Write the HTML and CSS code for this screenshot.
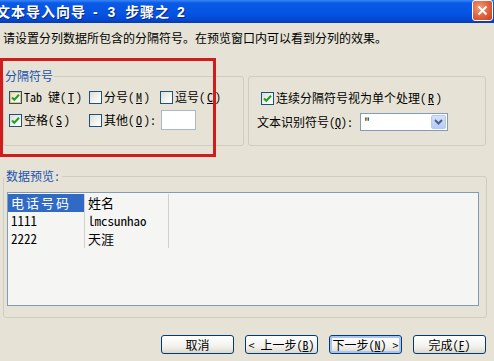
FILE: index.html
```html
<html>
<head>
<title>文本导入向导 - 3 步骤之 2</title>
<link rel="stylesheet" href="styles.css">
</head>
<body>

<div class="titlebar">
  <span class="title">文本导入向导<span class="lat"> - 3 </span>步骤之<span class="lat"> 2</span></span>
  <span class="close"><svg width="11" height="11" viewBox="0 0 11 11"><path d="M1.5 1.5l8 8M9.5 1.5l-8 8"/></svg></span>
</div>

<p class="intro">请设置分列数据所包含的分隔符号。在预览窗口内可以看到分列的效果。</p>

<div class="groups">

  <div class="group sep">
    <div class="legend">分隔符号</div>
    <div class="sep-grid">
      <label class="opt"><span class="box hot checked"><svg viewBox="0 0 11 11"><path d="M2 5.5l2.3 2.3 4.7-5"/></svg></span>Tab 键(<u>T</u>)</label>
      <label class="opt"><span class="box"></span>分号(<u>M</u>)</label>
      <label class="opt"><span class="box"></span>逗号(<u>C</u>)</label>
      <label class="opt"><span class="box checked"><svg viewBox="0 0 11 11"><path d="M2 5.5l2.3 2.3 4.7-5"/></svg></span>空格(<u>S</u>)</label>
      <label class="opt"><span class="box"></span>其他(<u>O</u>):<span class="field"></span></label>
    </div>
  </div>

  <div class="group other">
    <label class="opt first"><span class="box checked"><svg viewBox="0 0 11 11"><path d="M2 5.5l2.3 2.3 4.7-5"/></svg></span>连续分隔符号视为单个处理(<u>R</u>)</label>
    <div class="qualifier">
      文本识别符号(<u>Q</u>):
      <span class="combo"><span class="value">"</span><span class="drop"><svg width="9" height="6" viewBox="0 0 9 6"><path d="M1 1l3.5 3.5L8 1"/></svg></span></span>
    </div>
  </div>

</div>

<div class="group preview">
  <div class="legend">数据预览:</div>
  <div class="listbox">
    <div class="table">
      <div class="cell sel">电话号码</div><div class="cell">姓名</div>
      <div class="cell">1111</div><div class="cell">lmcsunhao</div>
      <div class="cell">2222</div><div class="cell">天涯</div>
    </div>
  </div>
</div>

<div class="buttons">
  <span class="btn">取消</span>
  <span class="btn">&lt; 上一步(<u>B</u>)</span>
  <span class="btn default">下一步(<u>N</u>) &gt;</span>
  <span class="btn">完成(<u>F</u>)</span>
</div>

<div class="marker"></div>

</body>
</html>
```

FILE: styles.css
```css
body {
   margin: 0;
   width: 494px;
   height: 361px;
   overflow: hidden;
   position: relative;
   background: #e6e3d6;
   color: #000;
   font: 12px/14px "Noto Sans Mono CJK SC", "Noto Sans CJK SC", monospace; }

u {
   text-decoration: underline;
   text-underline-offset: 1px; }

/* title bar */

.titlebar {
   height: 23px;
   display: flex;
   align-items: center;
   justify-content: space-between;
   padding-right: 1px;
   background: linear-gradient(#3a86f6 0, #0a5ae6 3px, #0553e2 14px, #0447d3 20px, #0b3aa8 23px); }

.title {
   margin-left: -4px;
   color: #fff;
   font-weight: bold;
   font-size: 14px;
   letter-spacing: 1px;
   white-space: pre;
   text-shadow: 1px 1px #0a2a86; }

.title .lat {
   font-family: "Liberation Sans", sans-serif;
   letter-spacing: 3px; }

.close {
   width: 21px;
   height: 21px;
   margin-top: -3px;
   box-sizing: border-box;
   border: 1px solid #fff;
   border-radius: 3px;
   display: flex;
   align-items: center;
   justify-content: center;
   background: radial-gradient(circle at 35% 35%, #f09a78, #dd5b36 60%, #c2421f); }

.close path {
   stroke: #fff;
   stroke-width: 2;
   fill: none; }

.intro {
   margin: 0;
   padding: 8px 0 0 3px; }

/* group boxes */

.group {
   box-sizing: border-box;
   border: 1px solid #d0cdbd;
   border-radius: 3px; }

.legend {
   width: fit-content;
   margin-top: -8px;
   padding: 0 1px;
   background: #e6e3d6;
   color: #2152b0; }

.groups {
   display: flex;
   margin-top: 31px; }

.sep {
   width: 241px;
   height: 70px;
   margin-left: 3px; }

.sep-grid {
   display: grid;
   grid-template-columns: 80px 71px 1fr;
   grid-template-rows: 16px 22px;
   row-gap: 4px;
   margin-top: 6px;
   padding-left: 5px; }

.opt {
   display: flex;
   align-items: center;
   gap: 2px;
   white-space: nowrap; }

.box {
   flex: none;
   width: 13px;
   height: 13px;
   box-sizing: border-box;
   border: 1px solid #1c5180;
   background: linear-gradient(135deg, #dcdcd7, #fbfbf9 80%);
   display: flex; }

.box svg {
   width: 11px;
   height: 11px; }

.box path {
   stroke: #21a121;
   stroke-width: 2;
   fill: none; }

.hot {
   box-shadow: inset 0 0 0 1px #f8c35a; }

.field {
   flex: none;
   width: 35px;
   height: 20px;
   margin-left: 3px;
   box-sizing: border-box;
   border: 1px solid #a8b8c8;
   background: #fff; }

.other {
   width: 238px;
   height: 70px;
   margin-left: 4px;
   padding-top: 13px; }

.first {
   height: 16px;
   padding-left: 12px; }

.qualifier {
   display: flex;
   align-items: center;
   height: 18px;
   margin-top: 7px;
   padding-left: 8px;
   white-space: nowrap; }

.combo {
   flex: none;
   width: 88px;
   height: 18px;
   margin-left: 7px;
   box-sizing: border-box;
   border: 1px solid #7f9db9;
   background: #fff;
   display: flex;
   align-items: center;
   justify-content: space-between; }

.value {
   padding-left: 3px; }

.drop {
   width: 15px;
   height: 14px;
   margin-right: 1px;
   box-sizing: border-box;
   border: 1px solid #b5c9f5;
   border-radius: 2px;
   background: linear-gradient(#d4e1fd, #b7cbf7);
   display: flex;
   align-items: center;
   justify-content: center; }

.drop path {
   stroke: #4d6185;
   stroke-width: 2;
   fill: none; }

/* preview */

.preview {
   width: 484px;
   height: 142px;
   margin: 30px 0 0 3px; }

.preview .legend {
   padding: 0 2px; }

.listbox {
   width: 472px;
   height: 114px;
   margin: 9px 0 0 3px;
   box-sizing: border-box;
   border: 1px solid #7f9db9;
   padding-top: 1px;
   background: #f5f5f4; }

.table {
   display: grid;
   grid-template-columns: 77px 84px;
   grid-auto-rows: 18px;
   font-size: 13px;
   line-height: 18px; }

.cell {
   padding-left: 3px;
   border-right: 1px solid #d4d0c8;
   white-space: nowrap; }

.sel {
   background: #316ac5;
   color: #fff;
   letter-spacing: 2px; }

/* buttons */

.buttons {
   display: flex;
   justify-content: flex-end;
   gap: 11px;
   margin-top: 17px;
   padding-right: 8px; }

.btn {
   width: 73px;
   height: 19px;
   box-sizing: border-box;
   border: 1px solid #003c74;
   border-radius: 3px;
   background: linear-gradient(#ffffff, #f3f2ee 60%, #dcd8ce);
   display: flex;
   align-items: center;
   justify-content: center;
   white-space: nowrap; }

.default {
   box-shadow: inset 0 0 0 2px #a9c4f0; }

/* red highlight drawn over the separator group */

.marker {
   position: absolute;
   left: 0;
   top: 58px;
   width: 216px;
   height: 99px;
   box-sizing: border-box;
   border: 3px solid #d01c1c; }
```
